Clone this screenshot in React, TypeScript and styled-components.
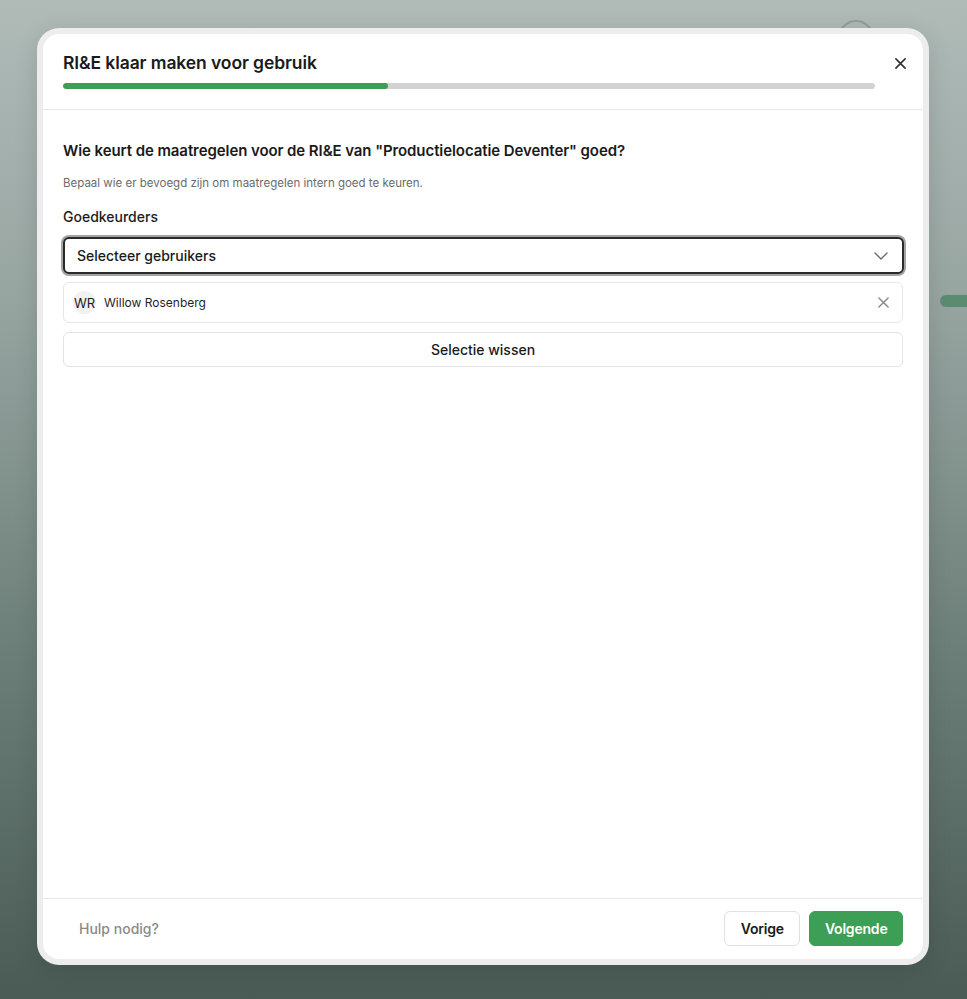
import React, { useState } from 'react'
import styled, { createGlobalStyle } from 'styled-components'

const GlobalStyle = createGlobalStyle`
  html, body {
    margin: 0;
    padding: 0;
  }
  body {
    font-family: Inter, "Noto Sans", sans-serif;
    color: #1c1c1c;
    -webkit-font-smoothing: antialiased;
  }
  * {
    box-sizing: border-box;
  }
`

const Backdrop = styled.div`
  position: relative;
  width: 967px;
  height: 999px;
  overflow: hidden;
  background: linear-gradient(180deg, #b0bbb8 0%, #97a5a1 30%, #6d7f79 65%, #4a5b56 100%);
  padding: 28px 0 0 37px;
`

const GhostCircle = styled.div`
  position: absolute;
  left: 838px;
  top: 20px;
  width: 36px;
  height: 36px;
  border-radius: 50%;
  border: 2px solid rgba(120, 135, 140, 0.55);
`

const GhostPill = styled.div`
  position: absolute;
  left: 940px;
  top: 295px;
  width: 40px;
  height: 12px;
  border-radius: 6px;
  background: #5d8b71;
`

const Frame = styled.div`
  position: relative;
  width: 892px;
  height: 937px;
  padding: 6px;
  border-radius: 22px;
  background: #ededed;
  box-shadow: 0 6px 24px rgba(0, 0, 0, 0.12);
`

const Dialog = styled.div`
  display: flex;
  flex-direction: column;
  height: 100%;
  background: #fff;
  border-radius: 16px;
  overflow: hidden;
`

const Header = styled.div`
  position: relative;
  padding: 17px 48px 20px 20px;
  border-bottom: 1px solid #e8e8e8;
`

const Title = styled.h2`
  margin: 0;
  font-size: 17.5px;
  line-height: 24px;
  font-weight: 600;
  letter-spacing: -0.1px;
  color: #1a1a1a;
`

const Progress = styled.div`
  margin-top: 8px;
  height: 6px;
  border-radius: 3px;
  background: #d3d3d3;
  overflow: hidden;
`

const ProgressFill = styled.div`
  height: 100%;
  background: #3c9f55;
  border-radius: 3px;
`

const CloseButton = styled.button`
  position: absolute;
  top: 17px;
  right: 11px;
  width: 24px;
  height: 24px;
  border: 0;
  padding: 0;
  background: transparent;
  display: flex;
  align-items: center;
  justify-content: center;
  cursor: pointer;
  color: #333;
`

const Body = styled.div`
  flex: 1;
  padding: 31px 19px 20px 20px;
`

const Question = styled.h3`
  margin: 0;
  font-size: 15px;
  line-height: 20px;
  font-weight: 600;
  letter-spacing: -0.08px;
  color: #1a1a1a;
`

const Hint = styled.p`
  margin: 14px 0 0;
  font-size: 11.5px;
  line-height: 16px;
  color: #6b6b6b;
`

const FieldLabel = styled.div`
  margin-top: 17px;
  font-size: 14px;
  line-height: 18px;
  font-weight: 500;
  color: #1c1c1c;
`

const Select = styled.button`
  margin-top: 11px;
  width: 100%;
  height: 37px;
  display: flex;
  align-items: center;
  justify-content: space-between;
  padding: 0 14px 0 12px;
  background: #fff;
  border: 2px solid #2a2a2a;
  border-radius: 6px;
  box-shadow: 0 0 0 2px #a4a4a4;
  font-family: inherit;
  font-size: 14px;
  font-weight: 500;
  color: #1a1a1a;
  cursor: pointer;
`

const Chip = styled.div`
  margin-top: 8px;
  height: 41px;
  display: flex;
  align-items: center;
  padding: 0 13px 0 9px;
  border: 1px solid #e6e6e6;
  border-radius: 6px;
  width: calc(100% - 1px);
`

const Avatar = styled.span`
  width: 23px;
  height: 23px;
  border-radius: 50%;
  background: #f1f1f1;
  display: flex;
  align-items: center;
  justify-content: center;
  font-size: 13px;
  font-weight: 400;
  color: #1a1a1a;
`

const ChipName = styled.span`
  flex: 1;
  margin-left: 8px;
  font-size: 12px;
  color: #1f1f1f;
`

const IconButton = styled.button`
  border: 0;
  background: transparent;
  padding: 0;
  display: flex;
  align-items: center;
  color: #8a8a8a;
  cursor: pointer;
`

const WideButton = styled.button`
  margin-top: 9px;
  width: calc(100% - 1px);
  height: 35px;
  background: #fff;
  border: 1px solid #e3e3e3;
  border-radius: 6px;
  font-family: inherit;
  font-size: 14px;
  font-weight: 500;
  color: #1a1a1a;
  cursor: pointer;
`

const Footer = styled.div`
  display: flex;
  align-items: center;
  justify-content: space-between;
  height: 61px;
  padding: 0 20px 1px;
  border-top: 1px solid #e8e8e8;
`

const HelpLink = styled.button`
  border: 0;
  background: transparent;
  padding: 0 16px;
  height: 35px;
  font-family: inherit;
  font-size: 14px;
  font-weight: 500;
  color: #8a8a8a;
  cursor: pointer;
`

const Actions = styled.div`
  display: flex;
  gap: 9px;
`

const ActionButton = styled.button<{ $primary?: boolean }>`
  height: 35px;
  padding: 0 ${({ $primary }) => ($primary ? '14.5px' : '15.5px')};
  border-radius: 6px;
  font-family: inherit;
  font-size: 14px;
  font-weight: 600;
  letter-spacing: -0.2px;
  cursor: pointer;
  border: 1px solid ${({ $primary }) => ($primary ? '#3c9f55' : '#e0e0e0')};
  background: ${({ $primary }) => ($primary ? '#3c9f55' : '#fff')};
  color: ${({ $primary }) => ($primary ? '#fff' : '#1a1a1a')};
`

const CloseIcon = ({ size = 12, stroke = 2 }: { size?: number, stroke?: number }) => (
  <svg width={size} height={size} viewBox="0 0 12 12" fill="none">
    <path d="M1 1L11 11M11 1L1 11" stroke="currentColor" strokeWidth={stroke} strokeLinecap="round" />
  </svg>
)

const ChevronDown = () => (
  <svg width="14" height="8" viewBox="0 0 14 8" fill="none">
    <path d="M1 1L7 7L13 1" stroke="#6b6b6b" strokeWidth="1.4" strokeLinecap="round" strokeLinejoin="round" />
  </svg>
)

const App = () => {
  const [users, setUsers] = useState([{ initials: 'WR', name: 'Willow Rosenberg' }])
  const step = 0.4

  return (
    <>
      <GlobalStyle />
      <Backdrop>
        <GhostCircle />
        <GhostPill />
        <Frame>
          <Dialog>
            <Header>
              <Title>RI&amp;E klaar maken voor gebruik</Title>
              <Progress>
                <ProgressFill style={{ width: `${step * 100}%` }} />
              </Progress>
              <CloseButton aria-label="Sluiten">
                <CloseIcon size={11} stroke={1.8} />
              </CloseButton>
            </Header>
            <Body>
              <Question>Wie keurt de maatregelen voor de RI&amp;E van "Productielocatie Deventer" goed?</Question>
              <Hint>Bepaal wie er bevoegd zijn om maatregelen intern goed te keuren.</Hint>
              <FieldLabel>Goedkeurders</FieldLabel>
              <Select>
                <span>Selecteer gebruikers</span>
                <ChevronDown />
              </Select>
              {users.map((u) => (
                <Chip key={u.name}>
                  <Avatar>{u.initials}</Avatar>
                  <ChipName>{u.name}</ChipName>
                  <IconButton onClick={() => setUsers(users.filter((x) => x !== u))}>
                    <CloseIcon size={11} stroke={1.6} />
                  </IconButton>
                </Chip>
              ))}
              <WideButton onClick={() => setUsers([])}>Selectie wissen</WideButton>
            </Body>
            <Footer>
              <HelpLink>Hulp nodig?</HelpLink>
              <Actions>
                <ActionButton>Vorige</ActionButton>
                <ActionButton $primary>Volgende</ActionButton>
              </Actions>
            </Footer>
          </Dialog>
        </Frame>
      </Backdrop>
    </>
  )
}

export default App
